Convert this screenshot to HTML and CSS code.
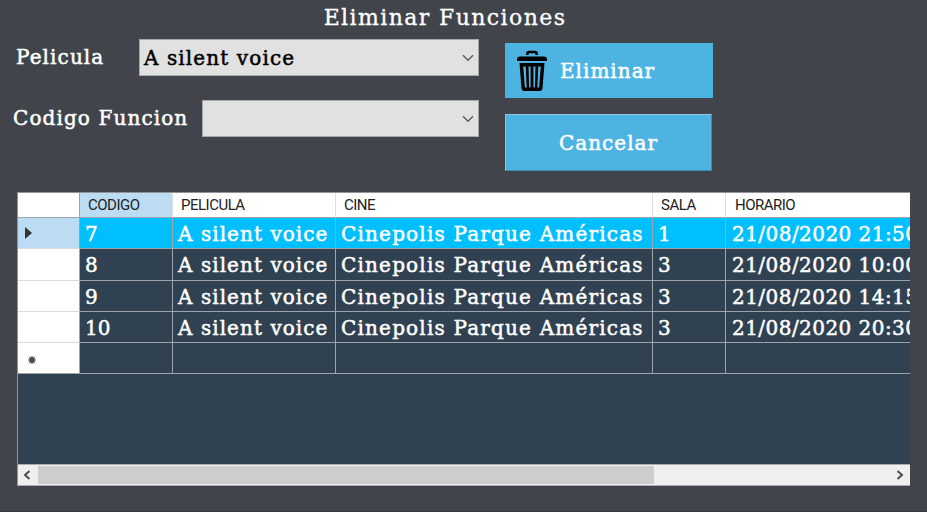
FILE: index.html
```html
<!DOCTYPE html>
<html lang="es">
<head>
<meta charset="utf-8">
<title>Eliminar Funciones</title>
<link rel="stylesheet" href="styles.css">
</head>
<body>
<main class="window">
  <h1 class="title"><span>Eliminar Funciones</span></h1>
  <section class="controls">
    <div class="fields">
      <div class="field">
        <span class="label pelicula">Pelicula</span>
        <div class="combo"><span class="value">A silent voice</span>
          <svg class="chevron" viewBox="0 0 12 8"><path d="M1 1.2 6 6.2 11 1.2"/></svg></div>
      </div>
      <div class="field">
        <span class="label codigo">Codigo Funcion</span>
        <div class="combo"><span class="value"></span>
          <svg class="chevron" viewBox="0 0 12 8"><path d="M1 1.2 6 6.2 11 1.2"/></svg></div>
      </div>
    </div>
    <div class="buttons">
      <button class="btn delete">
        <svg class="trash" viewBox="0 0 32 42">
          <path class="line" d="M11.300 5V3.800Q11.300 2 13 2h6Q20.700 2 20.700 3.800V5"/>
          <path d="M4 6.500h24q3 0 3 3v1.500H1V9.500q0-3 3-3z"/>
          <path fill-rule="evenodd" d="M3.500 13h25L26.500 38.500q-.2 2.500-2.700 2.500H8.200q-2.500 0-2.700-2.500zM7.200 16.500l1.700 21h1.800l-1-21zM12.500 16.500l.6 21h1.500v-21zM17.400 16.500v21h1.500l.6-21zM22.300 16.500l-1 21h1.800l1.700-21z"/>
        </svg>
        <span>Eliminar</span>
      </button>
      <button class="btn cancel"><span>Cancelar</span></button>
    </div>
  </section>
  <section class="datagrid">
    <div class="row head">
      <div class="cell"></div><div class="cell active">CODIGO</div><div class="cell">PELICULA</div><div class="cell">CINE</div><div class="cell">SALA</div><div class="cell">HORARIO</div>
    </div>
    <div class="row selected">
      <div class="cell mark"><svg class="arrow" viewBox="0 0 7 12"><path d="M0 0 7 6 0 12z"/></svg></div><div class="cell">7</div><div class="cell film">A silent voice</div><div class="cell cine">Cinepolis Parque Américas</div><div class="cell">1</div><div class="cell time">21/08/2020 21:50</div>
    </div>
    <div class="row">
      <div class="cell mark"></div><div class="cell">8</div><div class="cell film">A silent voice</div><div class="cell cine">Cinepolis Parque Américas</div><div class="cell">3</div><div class="cell time">21/08/2020 10:00</div>
    </div>
    <div class="row">
      <div class="cell mark"></div><div class="cell">9</div><div class="cell film">A silent voice</div><div class="cell cine">Cinepolis Parque Américas</div><div class="cell">3</div><div class="cell time">21/08/2020 14:15</div>
    </div>
    <div class="row">
      <div class="cell mark"></div><div class="cell">10</div><div class="cell film">A silent voice</div><div class="cell cine">Cinepolis Parque Américas</div><div class="cell">3</div><div class="cell time">21/08/2020 20:30</div>
    </div>
    <div class="row">
      <div class="cell mark"><svg class="star" viewBox="0 0 8 8"><path d="M4 .3v7.400M.3 4h7.400M1.300 1.300l5.400 5.400M6.700 1.300 1.300 6.700"/></svg></div><div class="cell"></div><div class="cell"></div><div class="cell"></div><div class="cell"></div><div class="cell"></div>
    </div>
    <div class="scrollbar">
      <svg class="nav" viewBox="0 0 8 10"><path d="M6.500 1 2 5l4.500 4"/></svg>
      <div class="track"><div class="thumb"></div></div>
      <svg class="nav" viewBox="0 0 8 10"><path d="M1.500 1 6 5 1.500 9"/></svg>
    </div>
  </section>
</main>
</body>
</html>
```

FILE: styles.css
```css
* { box-sizing: border-box; }
body {
  margin: 0;
  background: #41454b;
  color: #fff;
  font: 20px/28px "DejaVu Serif", serif;
  -webkit-text-stroke: .5px currentColor;
}
.window {
  width: 927px;
  height: 512px;
  overflow: hidden;
  display: flex;
  flex-direction: column;
  border-bottom: 1px solid #35383d;
}
.title {
  height: 39px;
  margin: 0;
  padding: 4px 37px 0 0;
  font-size: 22px;
  line-height: 27px;
  font-weight: 400;
  letter-spacing: 1.4px;
  text-align: center;
  white-space: nowrap;
  -webkit-text-stroke-width: .3px;
}
.controls { display: flex; height: 153px; }
.fields { width: 479px; display: flex; flex-direction: column; gap: 24px; }
.field { display: flex; height: 37px; letter-spacing: 1.1px; }
.label { line-height: 36px; white-space: nowrap; flex: none; }
.pelicula { width: 139px; padding-left: 16px; }
.codigo { width: 202px; padding-left: 13px; }
.combo {
  flex: 1;
  display: flex;
  align-items: center;
  justify-content: space-between;
  padding: 0 4px;
  border: 1px solid #a6a8aa;
  background: #e1e1e1;
  color: #000;
}
.value { white-space: nowrap; }
.chevron { width: 12px; height: 8px; fill: none; stroke: #5c5c5c; stroke-width: 1.5; }
.buttons { display: flex; flex-direction: column; gap: 16px; padding: 4px 0 0 26px; }
.btn {
  font: inherit;
  letter-spacing: 1px;
  color: #fff;
  background: #4db4e2;
  border: 0;
  padding: 0;
  display: flex;
  align-items: center;
}
.delete { width: 208px; height: 55px; padding-left: 11px; gap: 12px; }
.cancel { width: 207px; height: 57px; justify-content: center; border: 1px solid; border-color: #8bc7e3 #388bb2 #388bb2 #8bc7e3; }
.trash { width: 32px; height: 42px; fill: #000; }
.trash .line { fill: none; stroke: #000; stroke-width: 2.6; }
.datagrid {
  width: 893px;
  height: 294px;
  margin-left: 17px;
  overflow: hidden;
  display: flex;
  flex-direction: column;
  background: #304151;
  border-top: 1px solid #929497;
  border-left: 1px solid #929497;
}
.row { display: grid; grid-template-columns: 62px 93px 163px 317px 73px 184px; height: 31.300px; flex: none; }
.cell {
  border-right: 1px solid #9da3a8;
  border-bottom: 1px solid #9da3a8;
  padding: 2px 0 0 5px;
  white-space: nowrap;
  overflow: hidden;
}
.film { letter-spacing: 1.05px; }
.cine { letter-spacing: 1.18px; }
.time { letter-spacing: .45px; padding-left: 6px; }
.cell:last-child { border-right: 0; }
.mark { background: #fff; color: #333; border-bottom-color: #dadada; padding: 0 0 0 7px; display: flex; align-items: center; }
.selected .cell { background: #00bfff; }
.selected .mark { background: #bbdcf3; }
.row:nth-child(6) .mark { border-bottom-color: #9da3a8; padding-left: 10px; padding-top: 4px; }
.arrow { width: 7px; height: 12px; fill: #333; }
.star { width: 8px; height: 8px; stroke: #444; stroke-width: 1.6; }
.head { height: 25px; color: #222; font: 15px/24px Roboto, sans-serif; -webkit-text-stroke: 0; letter-spacing: -.5px; }
.head .cell { background: #fff; border-right-color: #dedede; padding: 0 0 0 8px; }
.head .cell:last-child { padding-left: 9px; }
.head .cell:first-child { border-right-color: #9da3a8; }
.head .active { background: #bbdcf3; }
.scrollbar {
  height: 22px;
  margin: auto 0 0 -1px;
  display: flex;
  align-items: center;
  justify-content: space-between;
  background: #efefef;
  border: solid #a9adb3;
  border-width: 1px 0;
  padding: 0 6px;
}
.nav { width: 8px; height: 10px; fill: none; stroke: #4d4d4d; stroke-width: 2; }
.track { width: 852px; height: 18px; }
.thumb { width: 616px; height: 18px; background: #cdcdcd; }
```
